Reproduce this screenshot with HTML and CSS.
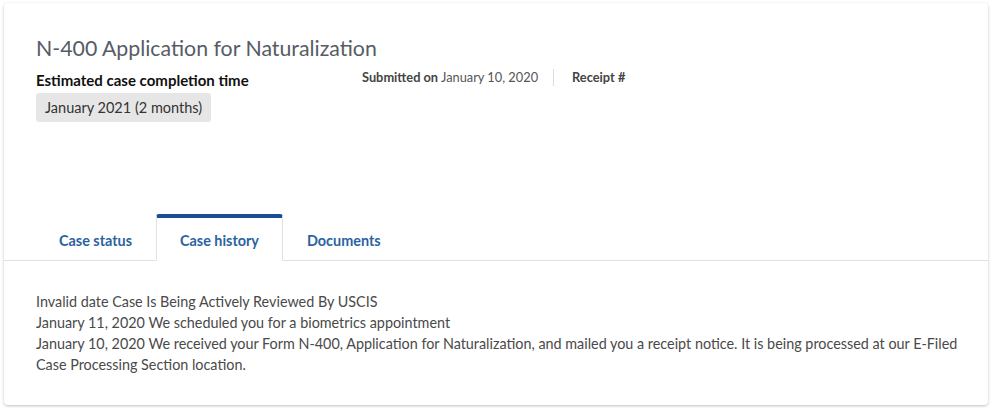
FILE: index.html
```html
<!DOCTYPE html>
<html lang="en">
<head>
    <meta charset="UTF-8">
    <meta name="viewport" content="width=device-width, initial-scale=1.0">
    <title>Case details</title>
    <link rel="stylesheet" href="styles.css">
</head>
<body>
    <div class="card">
        <div class="case-header">
            <h1>N-400 Application for Naturalization</h1>
            <div class="case-row">
                <div class="estimate">
                    <div class="estimate-label">Estimated case completion time</div>
                    <span class="estimate-value">January 2021 (2 months)</span>
                </div>
                <div class="meta">
                    <span class="meta-item"><b>Submitted on</b> January 10, 2020</span>
                    <span class="meta-divider"></span>
                    <span class="meta-item"><b>Receipt #</b></span>
                </div>
            </div>
        </div>

        <div class="tabs">
            <a class="tab">Case status</a>
            <a class="tab active">Case history</a>
            <a class="tab">Documents</a>
        </div>

        <div class="history">
            <div>Invalid date Case Is Being Actively Reviewed By USCIS</div>
            <div>January 11, 2020 We scheduled you for a biometrics appointment</div>
            <div>January 10, 2020 We received your Form N-400, Application for Naturalization, and mailed you a receipt notice. It is being processed at our E&#8209;Filed Case Processing Section location.</div>
        </div>
    </div>
</body>
</html>
```

FILE: styles.css
```css
body {
    margin: 0;
    background: #fff;
    font-family: Lato, "Open Sans", sans-serif;
    color: #1b1b1b;
}
.card {
    margin: 3px 12px 5px 4px;
    height: 402px;
    box-sizing: border-box;
    border-radius: 4px;
    background: #fff;
    box-shadow: 0 1px 3px rgba(0, 0, 0, 0.25);
    display: flex;
    flex-direction: column;
}
.case-header {
    padding: 31px 32px 0 32px;
    height: 211px;
    box-sizing: border-box;
}
h1 {
    margin: 0;
    font-size: 21.3px;
    font-weight: 400;
    line-height: 28px;
    color: #565c65;
}
.case-row {
    display: flex;
    margin-top: 5px;
}
.estimate {
    width: 326px;
}
.estimate-label {
    font-size: 15px;
    font-weight: 700;
    line-height: 24px;
    margin-top: 1px;
    color: #111;
}
.estimate-value {
    display: inline-block;
    margin-top: 1px;
    padding: 4px 9px;
    font-size: 14.5px;
    line-height: 21px;
    background: #e6e6e6;
    border-radius: 3px;
    color: #333;
}
.meta {
    display: flex;
    align-items: center;
    font-size: 12.8px;
    color: #555;
    height: 18px;
    margin-top: 1px;
}
.meta b {
    color: #444;
}
.meta-divider {
    width: 1px;
    height: 17px;
    background: #dcdcdc;
    margin: 0 18px 0 15px;
}
.tabs {
    display: flex;
    padding-left: 31px;
    border-bottom: 1px solid #dfe1e2;
}
.tab {
    padding: 2px 23px 0 23px;
    height: 40px;
    border-top: 4px solid transparent;
    display: flex;
    align-items: center;
    font-size: 14.4px;
    font-weight: 700;
    color: #2a63a0;
    margin-bottom: -1px;
    border-left: 1px solid transparent;
    border-right: 1px solid transparent;
}
.tab.active {
    border-top-color: #1a4f96;
    border-left-color: #dfe1e2;
    border-right-color: #dfe1e2;
    border-radius: 3px 3px 0 0;
    background: #fff;
    border-bottom: 1px solid #fff;
}
.history {
    padding: 30px 24px 0 32px;
    font-size: 14.36px;
    line-height: 21px;
    color: #4a4a4a;
}
```
